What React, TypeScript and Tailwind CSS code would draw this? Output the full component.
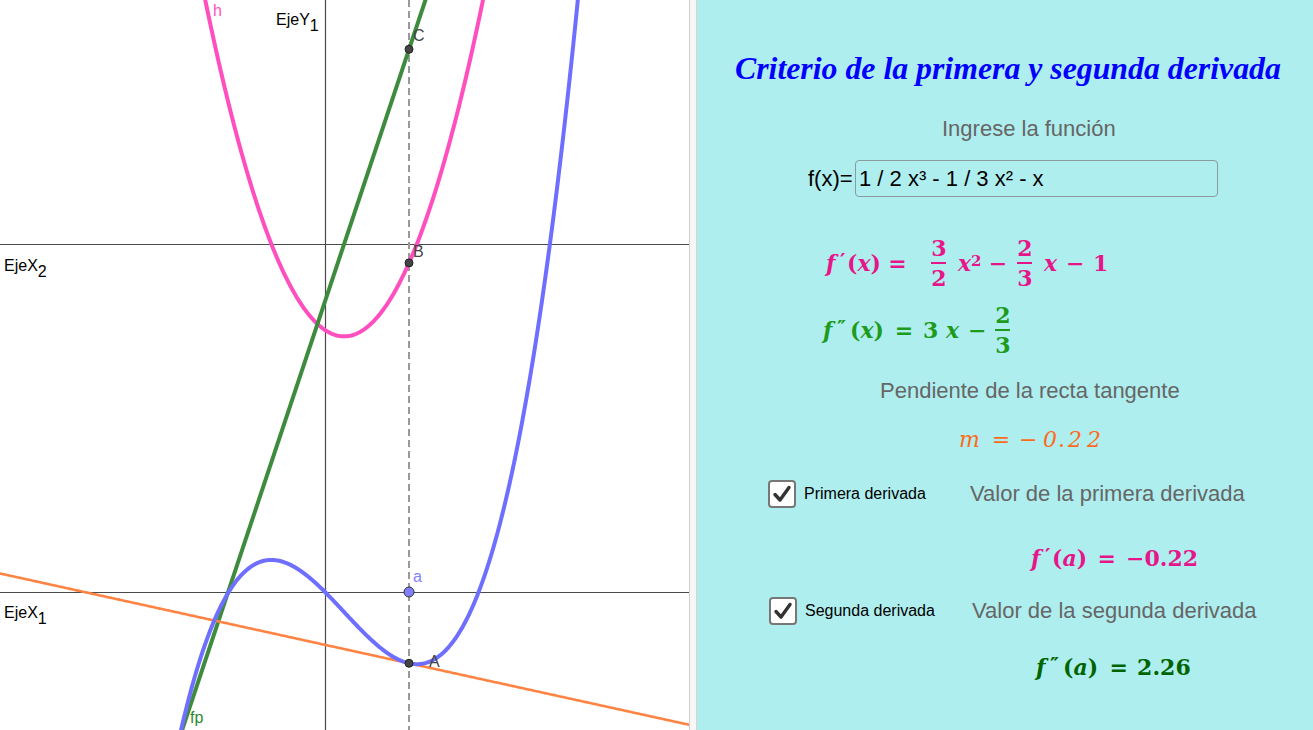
import React from "react";

const S = 86;
const OX = 325;
const OY1 = 592;
const OY2 = 244;
const A = 0.977;
const W = 689;
const H = 730;

const f = (x: number) => 0.5 * x * x * x - (x * x) / 3 - x;
const f1 = (x: number) => 1.5 * x * x - (2 * x) / 3 - 1;
const f2 = (x: number) => 3 * x - 2 / 3;

function curve(g: (x: number) => number, oy: number) {
  const pts: string[] = [];
  for (let px = -5; px <= W + 5; px += 1) {
    const x = (px - OX) / S;
    let y = oy - S * g(x);
    y = Math.max(-200, Math.min(H + 200, y));
    pts.push(`${px},${y.toFixed(2)}`);
  }
  return "M" + pts.join(" L");
}

const tangent = (x: number) => f(A) + f1(A) * (x - A);

function Graph() {
  const px = OX + A * S;
  const yA = OY1 - S * f(A);
  const yB = OY2 - S * f1(A);
  const yC = OY2 - S * f2(A);
  return (
    <svg width={W} height={H} viewBox={`0 0 ${W} ${H}`} className="block">
      {/* ejes */}
      <line x1={0} y1={OY2 + 0.5} x2={W} y2={OY2 + 0.5} stroke="#4a4a4a" strokeWidth={1.2} />
      <line x1={0} y1={OY1 + 0.5} x2={W} y2={OY1 + 0.5} stroke="#4a4a4a" strokeWidth={1.2} />
      <line x1={OX + 0.5} y1={0} x2={OX + 0.5} y2={H} stroke="#4a4a4a" strokeWidth={1.2} />
      <line x1={px} y1={0} x2={px} y2={H} stroke="#999" strokeWidth={2} strokeDasharray="7 4" />

      <path d={curve(f1, OY2)} fill="none" stroke="#ff4fbf" strokeWidth={4} />
      <path d={curve(f2, OY2)} fill="none" stroke="#3e8b3e" strokeWidth={4} />
      <path d={curve(tangent, OY1)} fill="none" stroke="#ff8444" strokeWidth={2.6} />
      <path d={curve(f, OY1)} fill="none" stroke="#6f6fff" strokeWidth={4} />

      <circle cx={px} cy={yC} r={4} fill="#444" stroke="#222" strokeWidth={1} />
      <circle cx={px} cy={yB} r={4} fill="#444" stroke="#222" strokeWidth={1} />
      <circle cx={px} cy={yA} r={4} fill="#444" stroke="#222" strokeWidth={1} />
      <circle cx={px} cy={OY1} r={5} fill="#7f7fff" stroke="#333" strokeWidth={1} />

      <g fontFamily="'Liberation Sans', Arial, sans-serif" fontSize={16}>
        <text x={276} y={25} fill="#000">EjeY<tspan dy={6}>1</tspan></text>
        <text x={4} y={271} fill="#000">EjeX<tspan dy={6}>2</tspan></text>
        <text x={4} y={618} fill="#000">EjeX<tspan dy={6}>1</tspan></text>
        <text x={213} y={16} fill="#ff4fbf">h</text>
        <text x={413} y={41} fill="#444">C</text>
        <text x={413} y={257} fill="#444">B</text>
        <text x={413} y={582} fill="#7f7fff">a</text>
        <text x={429} y={667} fill="#444">A</text>
        <text x={190} y={723} fill="#2d8a2d">fp</text>
      </g>
    </svg>
  );
}

function Frac({ n, d }: { n: string; d: string }) {
  return (
    <span className="inline-flex flex-col items-center leading-none w-[20px]">
      <span className="font-bold not-italic">{n}</span>
      <span className="w-[15px] h-[1.5px] bg-current my-[3px]" />
      <span className="font-bold not-italic">{d}</span>
    </span>
  );
}

// f'(x), f''(a) ...
function Fn({ two, arg }: { two?: boolean; arg: string }) {
  return (
    <span className="flex items-baseline">
      <span className="w-[15px] italic pl-[1px]">f</span>
      <span className={`${two ? "w-[13px]" : "w-[7px]"} not-italic text-[21px] relative -top-[3px] leading-none tracking-[-2px]`}>
        {two ? "′′" : "′"}
      </span>
      <span>(</span>
      <span className="italic">{arg}</span>
      <span>)</span>
    </span>
  );
}

function Check() {
  return (
    <div className="w-[28px] h-[28px] bg-white border-2 border-[#777] rounded-[4px] flex items-center justify-center">
      <svg width="20" height="20" viewBox="0 0 20 20">
        <polyline points="3,10.5 8,16 17,3.5" fill="none" stroke="#333" strokeWidth={3.4} strokeLinecap="round" strokeLinejoin="round" />
      </svg>
    </div>
  );
}

const serif = "font-['Liberation_Serif','Times_New_Roman',serif]";
const math = "font-['DejaVu_Serif',serif]";
const sans = "font-['Liberation_Sans',Arial,sans-serif]";

export default function App() {
  return (
    <div className="flex w-[1313px] h-[730px] overflow-hidden bg-white">
      <div className="w-[689px] h-[730px] overflow-hidden bg-white">
        <Graph />
      </div>
      <div className="w-[1px] bg-[#cfcfcf]" />
      <div className="w-[6px] bg-[#f7f7f7]" />
      <div className="w-[1px] bg-[#d4d4d4]" />
      <div className={`flex-1 bg-[#aeeeee] flex flex-col ${sans}`}>
        <div className={`mt-[49px] h-[40px] pl-[38px] flex items-center ${serif} text-[31.8px] font-bold italic text-[#0000ff] leading-none whitespace-nowrap`}>
          Criterio de la primera y segunda derivada
        </div>

        <div className="mt-[25px] h-[30px] pl-[245px] flex items-center text-[22px] text-[#666] leading-none">
          Ingrese la función
        </div>

        <div className="mt-[16px] h-[37px] pl-[111px] flex items-center">
          <span className="text-[22px] leading-none text-black w-[47px]">f(x)=</span>
          <div className="w-[363px] h-[37px] border border-[#8a9c9c] rounded-[4px] flex items-center pl-[3px] text-[22px] text-black leading-none">
            1 / 2 x³ - 1 / 3 x² - x
          </div>
        </div>

        {/* f'(x) */}
        <div className={`mt-[36px] h-[60px] pl-[128px] flex items-center ${math} text-[22px] font-bold text-[#e6168a] leading-none whitespace-nowrap`}>
          <Fn arg="x" />
          <span className="ml-[4px] w-[25px] text-center">=</span>
          <span className="ml-[19px] flex"><Frac n="3" d="2" /></span>
          <span className="ml-[9px] w-[24px] italic">x<sup className="not-italic text-[15px] relative -top-[5px]">2</sup></span>
          <span className="ml-[6px] w-[20px] text-center">−</span>
          <span className="ml-[7px] flex"><Frac n="2" d="3" /></span>
          <span className="ml-[9px] w-[12px] italic">x</span>
          <span className="ml-[10px] w-[18px] text-center">−</span>
          <span className="ml-[9px] w-[12px] text-center">1</span>
        </div>

        {/* f''(x) */}
        <div className={`mt-[12px] h-[50px] pl-[125px] flex items-center ${math} text-[22px] font-bold text-[#1d9b1d] leading-none whitespace-nowrap`}>
          <Fn two arg="x" />
          <span className="ml-[10px] w-[20px] text-center">=</span>
          <span className="ml-[9px] w-[13px] text-center">3</span>
          <span className="ml-[10px] w-[13px] italic text-center">x</span>
          <span className="ml-[9px] w-[18px] text-center">−</span>
          <span className="ml-[7px] flex"><Frac n="2" d="3" /></span>
        </div>

        <div className="mt-[21px] h-[30px] pl-[183px] flex items-center text-[22px] text-[#666] leading-none">
          Pendiente de la recta tangente
        </div>

        {/* m */}
        <div className={`mt-[19px] h-[30px] pl-[262px] flex items-center ${math} text-[22px] italic text-[#ff6a1a] leading-none whitespace-nowrap`}>
          <span className="w-[20px] text-center">m</span>
          <span className="ml-[12px] w-[20px] text-center not-italic">=</span>
          <span className="ml-[8px] w-[18px] text-center not-italic">−</span>
          <span className="ml-[6px] w-[13px] text-center">0</span>
          <span className="ml-[2px] w-[7px] text-center">.</span>
          <span className="ml-[3px] w-[14px] text-center">2</span>
          <span className="ml-[5px] w-[14px] text-center">2</span>
        </div>

        <div className="mt-[24px] h-[30px] pl-[71px] flex items-center">
          <Check />
          <span className="ml-[8px] w-[166px] text-[16px] text-black leading-none">Primera derivada</span>
          <span className="text-[22px] text-[#666] leading-none whitespace-nowrap">Valor de la primera derivada</span>
        </div>

        {/* f'(a) */}
        <div className={`mt-[34px] h-[30px] pl-[333px] flex items-center ${math} text-[22px] font-bold text-[#e6168a] leading-none whitespace-nowrap`}>
          <Fn arg="a" />
          <span className="ml-[9px] w-[21px] text-center">=</span>
          <span className="ml-[9px]">−0.22</span>
        </div>

        <div className="mt-[23px] h-[30px] pl-[72px] flex items-center">
          <Check />
          <span className="ml-[8px] w-[167px] text-[16px] text-black leading-none">Segunda derivada</span>
          <span className="text-[22px] text-[#666] leading-none whitespace-nowrap">Valor de la segunda derivada</span>
        </div>

        {/* f''(a) */}
        <div className={`mt-[26px] h-[30px] pl-[338px] flex items-center ${math} text-[22px] font-bold text-[#006400] leading-none whitespace-nowrap`}>
          <Fn two arg="a" />
          <span className="ml-[10px] w-[21px] text-center">=</span>
          <span className="ml-[8px]">2.26</span>
        </div>
      </div>
    </div>
  );
}
